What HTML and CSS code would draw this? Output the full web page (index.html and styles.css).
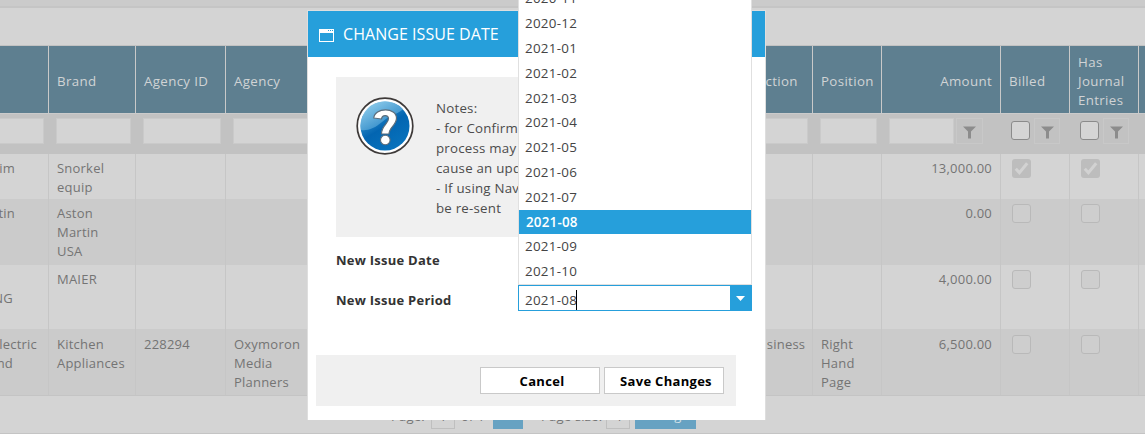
FILE: index.html
```html
<!DOCTYPE html>
<html lang="en">
<head>
<meta charset="utf-8">
<title>Change Issue Date</title>
<link rel="stylesheet" href="styles.css">
</head>
<body>
<svg class="defs" width="0" height="0">
  <defs>
    <symbol id="funnel" viewBox="0 0 13 13"><path d="M0 0.5H13L8 5.5V12.5H5V5.5Z"/></symbol>
    <symbol id="check" viewBox="0 0 19 19"><path d="M3.800 9.800L7.400 13.700L15.200 4.200" fill="none" stroke="#d2d2d2" stroke-width="3"/></symbol>
  </defs>
</svg>
<main class="page">
  <div class="topbar"></div>
  <div class="toolbar"></div>
  <div class="row head">
    <div></div><div>Brand</div><div>Agency ID</div><div>Agency</div><div></div><div>Section</div><div>Position</div><div class="num">Amount</div><div>Billed</div><div>Has Journal Entries</div><div></div>
  </div>
  <div class="row filter">
    <div><i class="field first"></i></div><div><i class="field"></i></div><div><i class="field"></i></div><div><i class="field"></i></div><div></div><div><i class="field"></i></div><div><i class="field"></i></div>
    <div><i class="field amount"></i><span class="fbtn wide"><svg><use href="#funnel"/></svg></span></div>
    <div><i class="box live"></i><span class="fbtn"><svg><use href="#funnel"/></svg></span></div>
    <div><i class="box live"></i><span class="fbtn"><svg><use href="#funnel"/></svg></span></div><div></div>
  </div>
  <div class="row r1">
    <div class="cut"><span>im</span></div><div>Snorkel equip</div><div></div><div></div><div></div><div></div><div></div><div class="num">13,000.00</div>
    <div><svg class="box on"><use href="#check"/></svg></div><div><svg class="box on"><use href="#check"/></svg></div><div></div>
  </div>
  <div class="row r2 alt">
    <div class="cut"><span>tin</span></div><div>Aston<br>Martin<br>USA</div><div></div><div></div><div></div><div></div><div></div><div class="num">0.00</div>
    <div><i class="box"></i></div><div><i class="box"></i></div><div></div>
  </div>
  <div class="row r3">
    <div class="cut c3"><span><br>NG</span></div><div>MAIER</div><div></div><div></div><div></div><div></div><div></div><div class="num">4,000.00</div>
    <div><i class="box"></i></div><div><i class="box"></i></div><div></div>
  </div>
  <div class="row r4 alt">
    <div class="cut c4"><span>lectric</span><span class="second">nd</span></div><div>Kitchen Appliances</div><div>228294</div><div>Oxymoron Media Planners</div><div></div><div class="biz">Business</div><div>Right Hand Page</div><div class="num">6,500.00</div>
    <div><i class="box"></i></div><div><i class="box"></i></div><div></div>
  </div>
  <footer class="pager">
    <span class="plabel">Page:</span><span class="pbox">1</span><span class="pof">of 1</span><span class="pbtn go"></span><span class="psize">Page size:</span><span class="pbox">4</span><span class="pbtn change">Change</span>
  </footer>
</main>

<section class="dialog">
  <header class="title">
    <svg class="win" viewBox="0 0 15 13"><path d="M0 0H15V13H0ZM1 4V12H14V4Z" fill="#fff" fill-rule="evenodd"/><path d="M9 1.5H10M11 1.5H12M13 1.5H14" stroke="#269fdb"/></svg>
    <span>CHANGE ISSUE DATE</span>
  </header>
  <div class="notes">
    <svg class="help" viewBox="0 0 58 58">
      <defs><linearGradient id="ball" x1="0.1" y1="0" x2="0.7" y2="1"><stop offset="0" stop-color="#54b3e2"/><stop offset="0.55" stop-color="#0365b1"/><stop offset="1" stop-color="#0873bd"/></linearGradient>
      <linearGradient id="shine" x1="0" y1="0" x2="0.8" y2="1"><stop offset="0" stop-color="#b5e2f5"/><stop offset="1" stop-color="#2c8bca"/></linearGradient></defs>
      <circle cx="29" cy="29" r="27.8" fill="#fff" stroke="#3e3a39" stroke-width="1.7"/>
      <circle cx="29" cy="29" r="24.5" fill="url(#ball)"/>
      <path d="M4.8 33A24.5 24.5 0 0 1 47 12.300C40 18 34 18 26 25C19 31 12 34 4.800 33Z" fill="url(#shine)" opacity="0.75"/>
      <path d="M17.800 21C18.500 10.500 40.500 10 40.500 21C40.500 28.500 33 30 33 37H25.500C25.500 28.500 32.500 27 32.500 21.500C32.500 17.500 26 17.500 25.500 22Z" fill="#fff" stroke="#5c6d7b" stroke-width="1.200" stroke-linejoin="round"/>
      <circle cx="29.300" cy="43" r="4.800" fill="#fff" stroke="#5c6d7b" stroke-width="1.100"/>
    </svg>
    <p>Notes:<br>- for Confirm<br>process may<br>cause an upd<br>- If using Nav<br>be re-sent</p>
  </div>
  <div class="label date">New Issue Date</div>
  <div class="label period">New Issue Period</div>
  <footer class="actions"><button>Cancel</button><button class="save">Save Changes</button></footer>
</section>

<div class="picker">
  <ul class="list">
    <li>2020-11</li><li>2020-12</li><li>2021-01</li><li>2021-02</li><li>2021-03</li><li>2021-04</li><li>2021-05</li><li>2021-06</li><li>2021-07</li><li class="selected">2021-08</li><li>2021-09</li><li>2021-10</li>
  </ul>
  <div class="combo"><span class="value">2021-08</span><span class="caret"></span><span class="arrow"><svg viewBox="0 0 9 5"><path d="M0 0H9L4.500 5Z" fill="#fff"/></svg></span></div>
</div>
</body>
</html>
```
FILE: styles.css
```css
* { box-sizing: border-box; }
body { margin: 0; width: 1145px; height: 434px; overflow: hidden; position: relative; background: #d4d4d4; font-family: "Open Sans", "Noto Sans", sans-serif; font-size: 13px; line-height: 19px; color: #747474; letter-spacing: 0.22px; }
.defs { display: none; }
.page { height: 434px; display: flex; flex-direction: column; border-bottom: 1px solid #c4c4c4; }
.topbar { height: 8px; flex: none; background: #cbcbcb; border-bottom: 2px solid #c5c5c5; }
.toolbar { height: 38px; flex: none; border-bottom: 1px solid #c2c2c2; }

/* Grid */
.row { display: grid; flex: none; grid-template-columns: 49px 87px 90px 90px 426px 71px 69px 119px 69px 69px 6px; }
.row > div { padding: 5px 8px 0; border-right: 1px solid #c6c6c6; overflow: hidden; }
.row > div:nth-child(4), .row > div:nth-child(5) { border-right: 0; }
.row > div:last-child { border-right: 0; padding: 0; }
.row .num { text-align: right; }
.head { height: 67px; background: #5e7f90; color: #d0d3d5; font-size: 13.3px; letter-spacing: 0.35px; }
.row.head > div { display: flex; align-items: center; padding-top: 3px; padding-right: 4px; border-color: #c9c9c9; }
.row.head .num { justify-content: flex-end; padding-right: 8px; }
.filter { height: 41px; background: #c2c2c2; border-top: 1px solid #cbcbcb; }
.row.filter > div { display: flex; align-items: flex-start; padding: 4px 5px 0 7px; border-right: 0; }
.field { height: 26px; flex: 1; background: #d4d4d4; border: 1px solid #cacaca; }
.row.filter > div:first-child { padding-left: 0; }
.field.first { border-left: 0; }
.field.amount { flex: 0 0 65px; }
.fbtn { width: 26px; height: 26px; margin-left: 2px; display: flex; align-items: center; justify-content: center; border: 1px solid #c8c8c8; }
.fbtn.wide { width: 27px; }
.fbtn svg { width: 13px; height: 13px; margin-top: 2px; fill: #8c8c8c; }
.row.filter > div:nth-child(9), .row.filter > div:nth-child(10) { padding-left: 10px; padding-right: 0; }
.box { display: block; flex: none; width: 19px; height: 19px; border: 1px solid #b9b9b9; border-radius: 3px; background: #cecece; margin: 0 0 0 3px; }
.box.live { margin: 3px 2px 0 0; border-color: #8b8b8b; background: #d5d5d5; }
.box.on { border: 0; background: #bdbdbd; }
.r1 { height: 45px; }
.r2 { height: 66px; }
.r3 { height: 64px; }
.r4 { height: 67px; border-bottom: 1px solid #c4c4c4; }
.row.r4 > div { padding-top: 6px; }
.alt { background: #cbcbcb; }
.row .cut { display: flex; flex-direction: column; align-items: flex-end; padding: 5px 33px 0 0; white-space: nowrap; }
.row .c3 { padding-right: 35px; }
.row .c4 { padding-right: 11px; }
.second { margin-right: 24px; }
.row .biz { padding-left: 8px; padding-right: 0; }

/* Pager */
.pager { flex: 1; display: flex; align-items: flex-start; padding: 9px 0 0 391px; line-height: 23px; }
.plabel { width: 40px; }
.pbox { width: 24px; height: 24px; border: 1px solid #bfbfbf; line-height: 21px; text-align: center; }
.pof { width: 38px; padding-left: 6px; }
.pbtn { height: 24px; background: #67a2c2; color: #d4e1e8; text-align: center; line-height: 20px; }
.go { width: 30px; }
.psize { width: 83px; padding-left: 18px; }
.change { width: 61px; margin-left: 5px; }

/* Dialog */
.dialog { position: absolute; left: 307px; top: 10px; width: 459px; height: 410px; background: #fff; border: 1px solid #dedede; border-bottom: 0; color: #333; display: flex; flex-direction: column; }
.title { height: 46px; flex: none; background: #269fdb; color: #fff; display: flex; align-items: center; padding-left: 11px; font-size: 16px; letter-spacing: 0.05px; }
.win { width: 15px; height: 13px; margin: 3px 9px 0 0; }
.notes { width: 401px; height: 160px; margin: 20px 0 0 28px; padding: 20px; background: #f0f0f0; display: flex; font-size: 13.3px; line-height: 20px; color: #4c4c4c; }
.help { width: 58px; height: 58px; flex: none; margin-right: 22px; }
.notes p { margin: 1px 0 0; white-space: nowrap; letter-spacing: 0.22px; }
.label { margin-left: 28px; height: 20px; line-height: 20px; font-weight: 700; font-size: 13px; letter-spacing: 0.25px; }
.date { margin-top: 13px; }
.period { margin-top: 20px; }
.actions { width: 420px; height: 51px; margin: 45px 0 0 8px; padding: 12px; display: flex; justify-content: flex-end; gap: 4px; background: #f0f0f0; }
.actions button { width: 120px; height: 27px; padding: 0 0 0 4px; border: 1px solid #c9c9c9; background: #fff; color: #000; font: 700 13px "Open Sans", sans-serif; letter-spacing: 0.3px; }

/* Period picker */
.picker { position: absolute; left: 518px; top: 0; width: 234px; height: 311px; display: flex; flex-direction: column; justify-content: flex-end; overflow: hidden; font-size: 13.4px; letter-spacing: 0.28px; color: #444; }
.list { list-style: none; margin: 0; padding: 0; background: #fff; border: 1px solid #e0e0e0; flex: none; }
.list li { height: 24.8px; line-height: 25.8px; padding-left: 6px; }
.list .selected { background: #269fdb; color: #fff; padding-left: 7px; font-weight: 600; letter-spacing: 0.2px; line-height: 24.8px; }
.combo { height: 26px; flex: none; border: 1px solid #269fdb; background: #fff; display: flex; align-items: center; padding-left: 6px; }
.value { padding-top: 4px; }
.caret { width: 1px; height: 20px; margin: 3px 0 0 -1px; background: #000; }
.arrow { width: 21px; height: 24px; margin-left: auto; background: #269fdb; display: flex; align-items: center; justify-content: center; }
.arrow svg { width: 9px; height: 5px; }
```
